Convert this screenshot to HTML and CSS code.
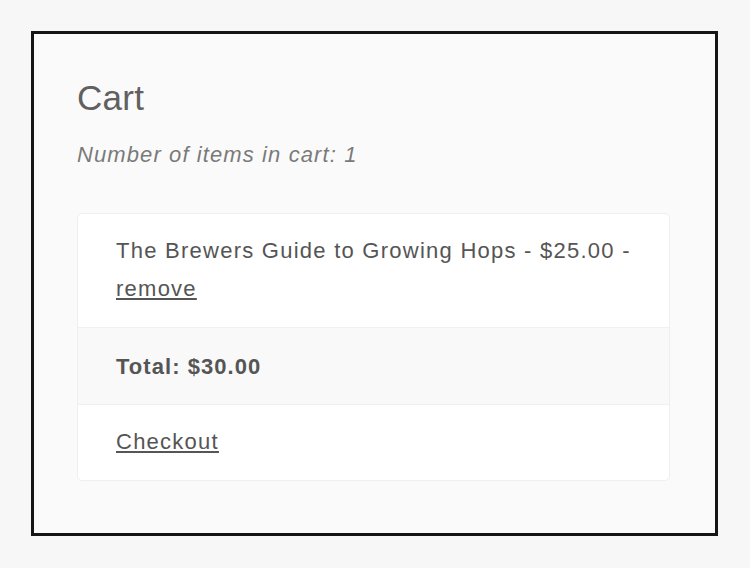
FILE: index.html
```html
<!DOCTYPE html>
<html>
<head>
<meta charset="utf-8">
<link rel="stylesheet" href="styles.css">
</head>
<body>
<div class="frame">
  <h1 class="title">Cart</h1>
  <p class="count">Number of items in cart: 1</p>
  <div class="card">
    <div class="row">The Brewers Guide to Growing Hops - $25.00 - <a href="#" class="link">remove</a></div>
    <div class="row total">Total: $30.00</div>
    <div class="row"><a href="#" class="link">Checkout</a></div>
  </div>
</div>
</body>
</html>
```
FILE: styles.css
```css
html, body {
  margin: 0;
  padding: 0;
  background: #f7f7f7;
}
body {
  padding: 31px 0 0 31px;
  font-family: "Liberation Sans", Arial, sans-serif;
  color: #555;
}
.frame {
  box-sizing: border-box;
  width: 687px;
  height: 505px;
  border: 3px solid #151515;
  background: #fafafa;
  padding: 43px 45px 0 43px;
}
.title {
  margin: 0;
  font-size: 35px;
  line-height: 42px;
  font-weight: normal;
  color: #606060;
  letter-spacing: 0.3px;
}
.count {
  margin: 23px 0 0;
  font-size: 22px;
  line-height: 26px;
  font-style: italic;
  color: #7a7a7a;
  letter-spacing: 1.1px;
}
.card {
  margin-top: 45px;
  background: #fff;
  border: 1px solid #efefef;
  border-radius: 5px;
  overflow: hidden;
}
.row {
  padding: 18px 30px 19px 38px;
  font-size: 22px;
  line-height: 38px;
  color: #555;
  border-top: 1px solid #f0f0f0;
  letter-spacing: 1.25px;
}
.row:first-child {
  border-top: none;
}
.total {
  background: #f9f9f9;
  font-weight: bold;
  padding-top: 20px;
  padding-bottom: 18px;
  letter-spacing: 1.05px;
}
.link {
  color: #555;
  text-decoration: underline;
}
```
